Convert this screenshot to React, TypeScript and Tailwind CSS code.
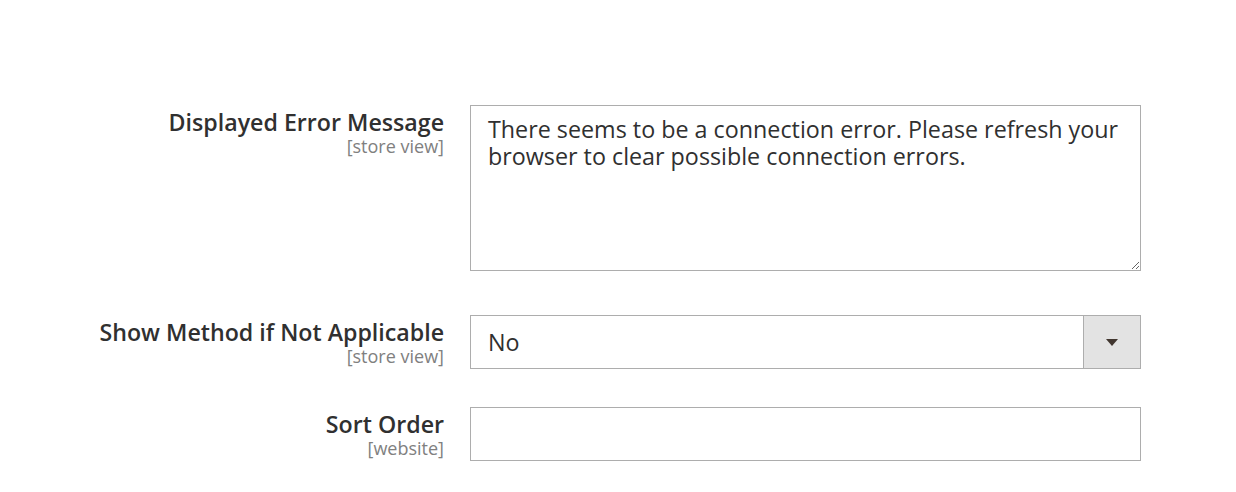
const fieldFont = { fontFamily: '"Open Sans", "Liberation Sans", sans-serif' };

function Label({ title, scope }: { title: string; scope: string }) {
  return (
    <div className="w-[444px] shrink-0 text-right pt-[4px]">
      <div className="text-[23.2px] leading-[26px] font-semibold text-[#303030]">{title}</div>
      <div className="text-[18px] leading-[22px] text-[#808080]">{scope}</div>
    </div>
  );
}

export default function App() {
  return (
    <div className="w-[1236px] h-[492px] bg-white pt-[105px]" style={fieldFont}>
      <div className="flex gap-[26px]">
        <Label title="Displayed Error Message" scope="[store view]" />
        <textarea
          className="w-[671px] h-[166px] border border-[#adadad] bg-white px-[17px] pt-[10px] text-[23.3px] leading-[27px] text-[#303030] outline-none"
          defaultValue="There seems to be a connection error. Please refresh your browser to clear possible connection errors."
        />
      </div>

      <div className="flex gap-[26px] mt-[44px]">
        <Label title="Show Method if Not Applicable" scope="[store view]" />
        <div className="w-[671px] h-[54px] border border-[#adadad] bg-white flex">
          <div className="flex-1 flex items-center px-[17px] text-[23.3px] text-[#303030]">No</div>
          <div className="w-[57px] border-l border-[#adadad] bg-[#e3e3e3] flex items-center justify-center">
            <svg width="12" height="7" viewBox="0 0 12 7">
              <path d="M0 0 L12 0 L6 7 Z" fill="#41362f" />
            </svg>
          </div>
        </div>
      </div>

      <div className="flex gap-[26px] mt-[38px]">
        <Label title="Sort Order" scope="[website]" />
        <input className="w-[671px] h-[54px] border border-[#adadad] bg-white px-[17px] text-[23.3px] text-[#303030] outline-none" />
      </div>
    </div>
  );
}
